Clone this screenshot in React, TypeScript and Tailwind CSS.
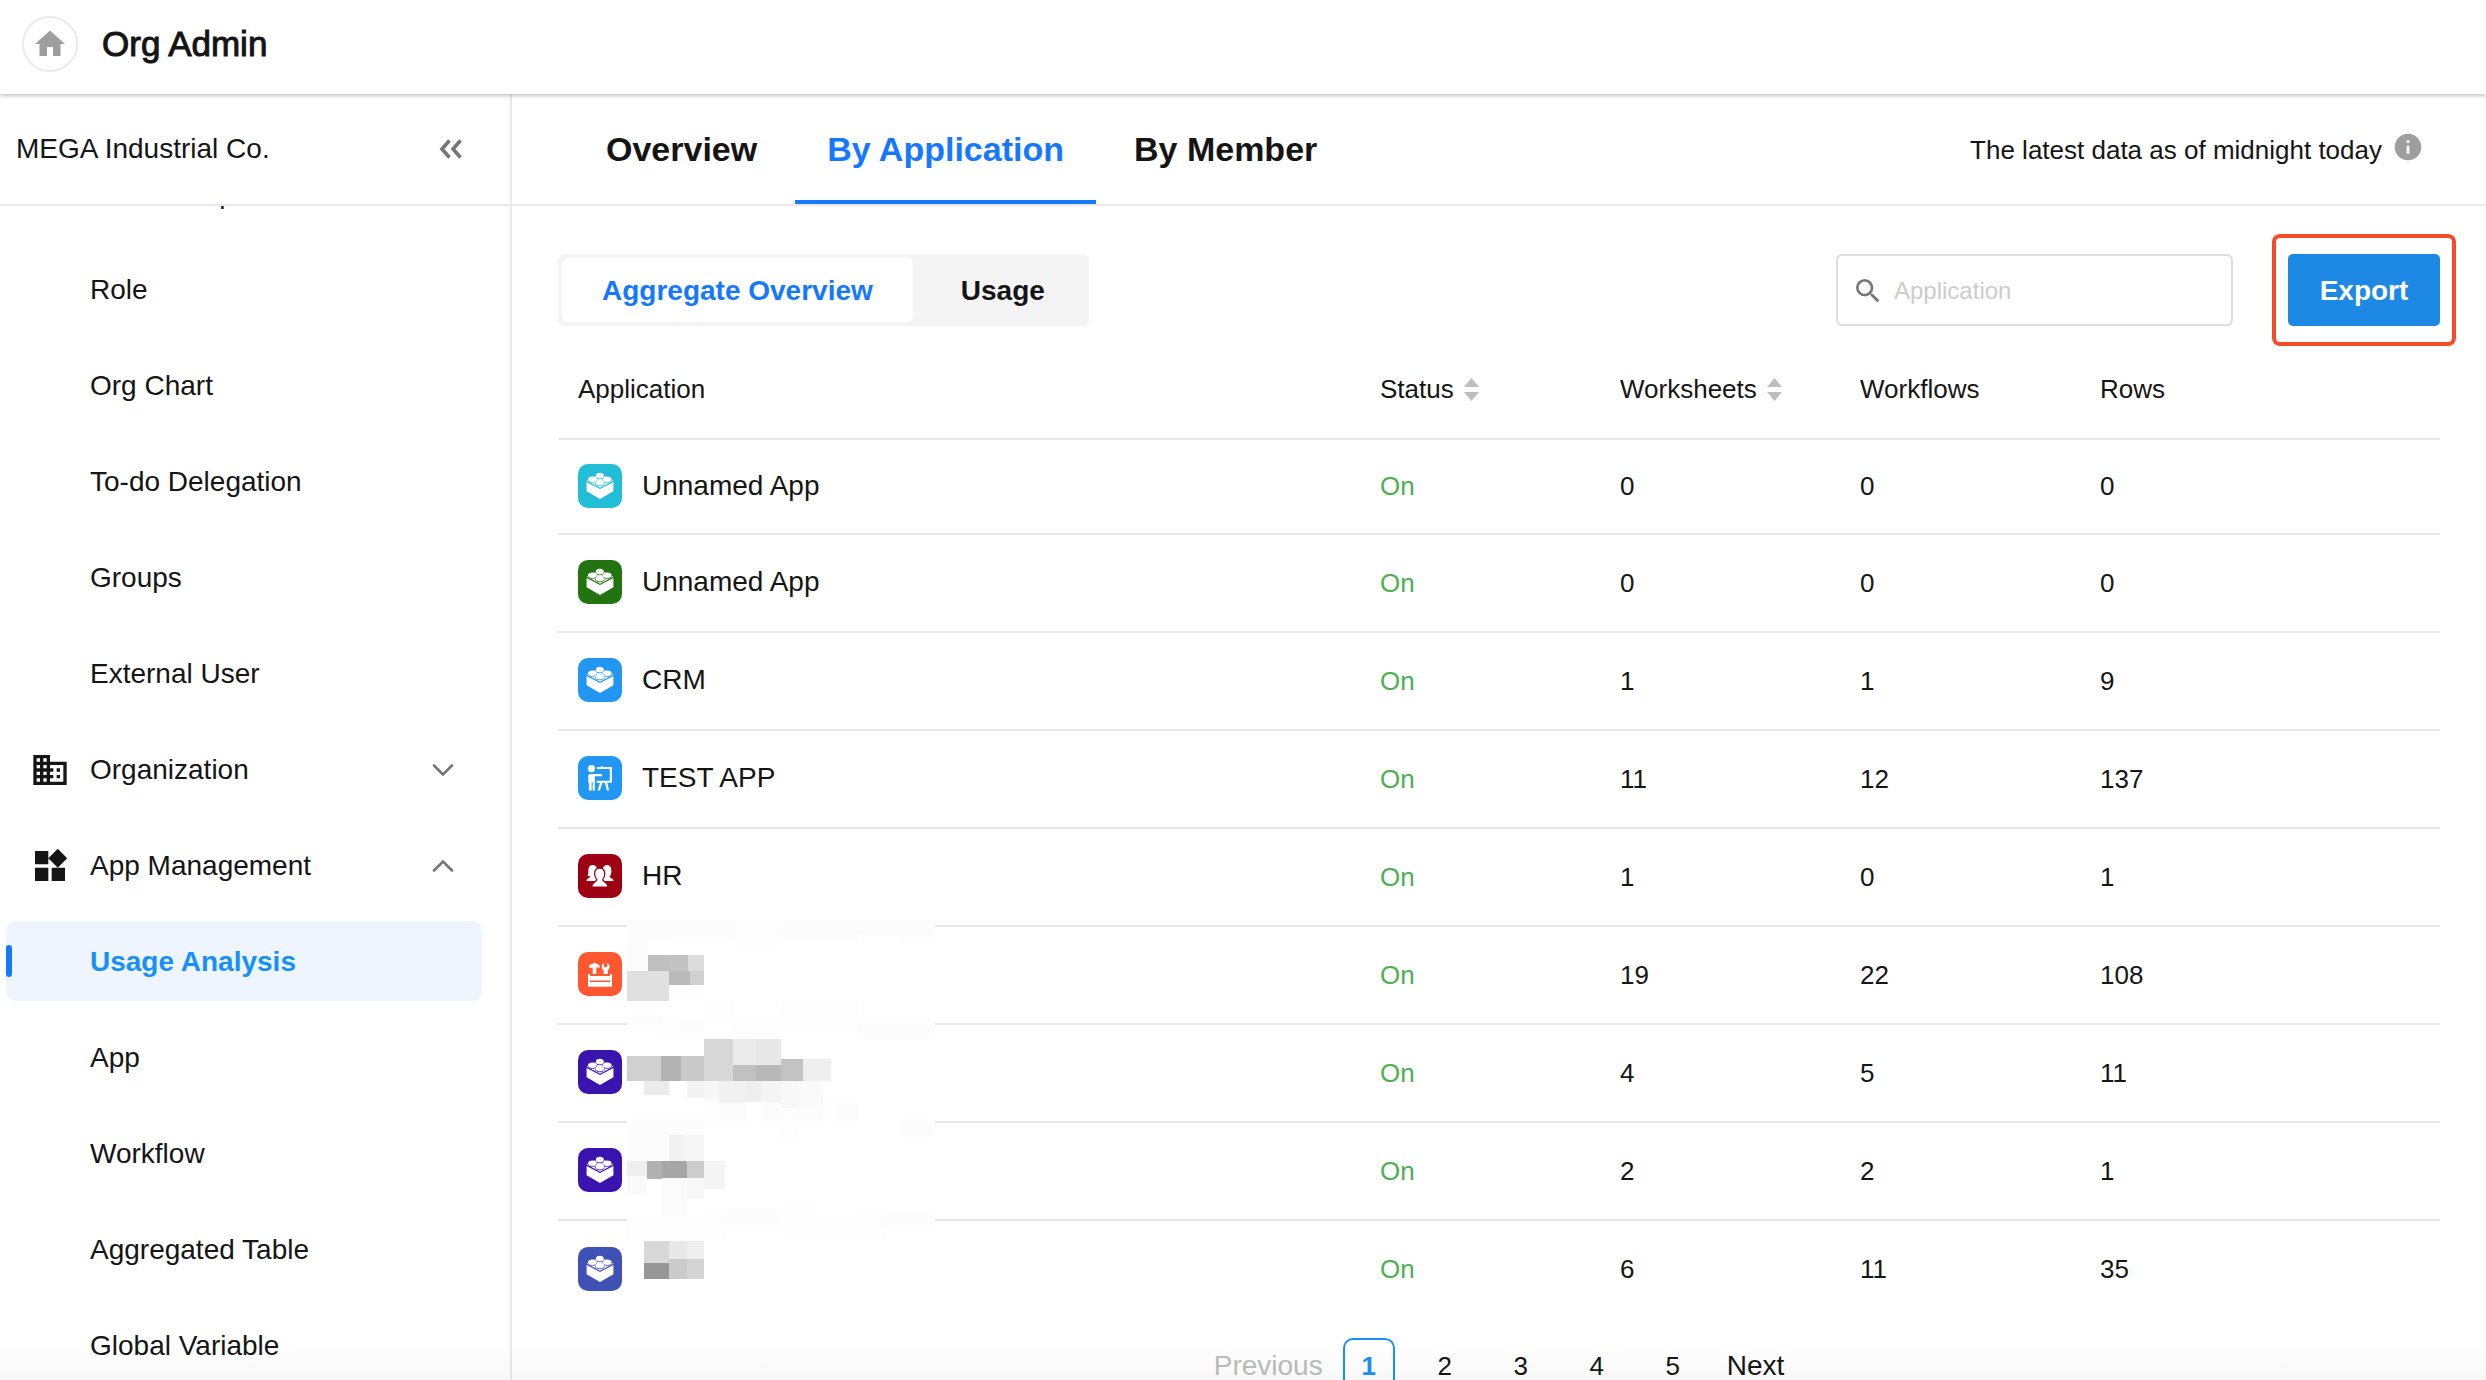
import React, { useState } from "react";
import { MdBusiness, MdHome, MdInfo, MdSearch, MdWidgets } from "react-icons/md";

type AppIconName = "brick" | "teach" | "people" | "toolbox";

interface AppRow {
  name: string;
  icon: AppIconName;
  color: string;
  worksheets: number;
  workflows: number;
  rows: number;
}

const apps: AppRow[] = [
  { name: "Unnamed App", icon: "brick", color: "#22bdd6", worksheets: 0, workflows: 0, rows: 0 },
  { name: "Unnamed App", icon: "brick", color: "#237411", worksheets: 0, workflows: 0, rows: 0 },
  { name: "CRM", icon: "brick", color: "#2196f3", worksheets: 1, workflows: 1, rows: 9 },
  { name: "TEST APP", icon: "teach", color: "#2196f3", worksheets: 11, workflows: 12, rows: 137 },
  { name: "HR", icon: "people", color: "#9c0012", worksheets: 1, workflows: 0, rows: 1 },
  { name: "", icon: "toolbox", color: "#ff572f", worksheets: 19, workflows: 22, rows: 108 },
  { name: "", icon: "brick", color: "#3914af", worksheets: 4, workflows: 5, rows: 11 },
  { name: "", icon: "brick", color: "#3914af", worksheets: 2, workflows: 2, rows: 1 },
  { name: "", icon: "brick", color: "#3f51b5", worksheets: 6, workflows: 11, rows: 35 },
];

const userItems = ["User & Department", "Role", "Org Chart", "To-do Delegation", "Groups", "External User"];
const appItems = ["Usage Analysis", "App", "Workflow", "Aggregated Table", "Global Variable"];

// x, y, width, height, fill
const mosaicBlocks: [number, number, number, number, string][] = [
  [201, 36, 330, 60, "#fcfcfc"],
  [531, 36, 132, 75, "#fdfdfd"],
  [663, 36, 231, 60, "#fcfcfc"],
  [894, 36, 126, 42, "#fcfcfc"],
  [1020, 36, 105, 64, "#fcfcfc"],
  [327, 90, 157, 6, "#ffffff"],
  [201, 96, 63, 90, "#fbfbfb"],
  [264, 138, 63, 48, "#bfbfbf"],
  [327, 138, 57, 48, "#c2c2c2"],
  [384, 138, 48, 48, "#dcdcdc"],
  [201, 186, 126, 90, "#e0e0e0"],
  [327, 186, 63, 42, "#bababa"],
  [390, 186, 42, 42, "#d1d1d1"],
  [327, 228, 105, 48, "#fefefe"],
  [201, 318, 102, 45, "#fcfcfc"],
  [303, 324, 54, 63, "#fdfdfd"],
  [357, 330, 75, 57, "#fcfcfc"],
  [432, 276, 87, 68, "#fdfdfd"],
  [519, 328, 144, 62, "#fdfdfd"],
  [663, 276, 231, 79, "#fdfdfd"],
  [894, 328, 126, 62, "#fcfcfc"],
  [1020, 339, 105, 51, "#fcfcfc"],
  [201, 441, 102, 75, "#d0d0d0"],
  [303, 441, 60, 75, "#b3b3b3"],
  [363, 441, 69, 75, "#cacaca"],
  [432, 390, 87, 126, "#d8d8d8"],
  [519, 390, 69, 78, "#ebebeb"],
  [588, 390, 75, 78, "#e8e8e8"],
  [519, 468, 69, 48, "#c1c1c1"],
  [588, 468, 75, 48, "#b8b8b8"],
  [663, 450, 66, 66, "#c3c3c3"],
  [729, 450, 84, 66, "#eeeeee"],
  [252, 516, 75, 42, "#ebebeb"],
  [381, 516, 51, 51, "#f3f3f3"],
  [432, 516, 45, 57, "#f7f7f7"],
  [477, 516, 81, 66, "#f1f1f1"],
  [558, 516, 45, 63, "#eeeeee"],
  [603, 516, 60, 63, "#f4f4f4"],
  [663, 516, 48, 81, "#f8f8f8"],
  [711, 516, 78, 81, "#fafafa"],
  [432, 573, 45, 68, "#fdfdfd"],
  [477, 582, 81, 59, "#fcfcfc"],
  [603, 579, 60, 60, "#fcfcfc"],
  [663, 597, 48, 102, "#fdfdfd"],
  [711, 597, 78, 54, "#fcfcfc"],
  [789, 560, 42, 79, "#fefefe"],
  [831, 582, 63, 57, "#fcfcfc"],
  [201, 630, 231, 126, "#fcfcfc"],
  [1020, 630, 105, 54, "#fcfcfc"],
  [327, 678, 45, 78, "#f1f1f1"],
  [372, 678, 60, 78, "#f6f6f6"],
  [201, 756, 60, 45, "#efefef"],
  [261, 756, 45, 54, "#b1b1b1"],
  [306, 756, 75, 51, "#a6a6a6"],
  [381, 756, 51, 51, "#cccccc"],
  [432, 756, 63, 84, "#f5f5f5"],
  [201, 801, 60, 54, "#f9f9f9"],
  [306, 807, 75, 113, "#fbfbfb"],
  [381, 807, 51, 63, "#f8f8f8"],
  [201, 920, 231, 76, "#fdfdfd"],
  [432, 900, 63, 96, "#fdfdfd"],
  [495, 900, 168, 50, "#fcfcfc"],
  [663, 873, 96, 123, "#fefefe"],
  [759, 927, 135, 69, "#fdfdfd"],
  [894, 906, 82, 90, "#fdfdfd"],
  [976, 906, 149, 48, "#fcfcfc"],
  [252, 996, 75, 66, "#d8d8d8"],
  [327, 996, 54, 54, "#e8e8e8"],
  [381, 996, 51, 54, "#eeeeee"],
  [252, 1062, 75, 48, "#969696"],
  [327, 1050, 54, 60, "#cbcbcb"],
  [381, 1050, 51, 60, "#d4d4d4"],
];

const Mosaic = () => (
  <svg
    className="absolute left-[69px] top-[562px] pointer-events-none"
    width="308"
    height="388"
    viewBox="201 36 924 1164"
    shapeRendering="crispEdges"
    aria-hidden="true"
  >
    <rect x="201" y="36" width="924" height="1164" fill="#ffffff" />
    {mosaicBlocks.map(([x, y, w, h, fill], i) => (
      <rect key={i} x={x} y={y} width={w} height={h} fill={fill} />
    ))}
  </svg>
);

const AppIcon = ({ icon, color }: { icon: AppIconName; color: string }) => (
  <svg width="44" height="44" viewBox="0 0 44 44" className="shrink-0" aria-hidden="true">
    <rect width="44" height="44" rx="10" fill={color} />
    {icon === "brick" && (
      <g fill="#fff">
        <path d="M8.6 18 22 25l13.400-7v9.200L22 35 8.600 27.200z" />
        <path d="M8.600 16.600 21.800 10l13.600 6.600L22 23.800z" />
        <g stroke={color} strokeWidth="0.9">
          <ellipse cx="14.4" cy="15.800" rx="4.300" ry="2.500" />
          <ellipse cx="29.200" cy="15.800" rx="4.300" ry="2.500" />
          <ellipse cx="21.800" cy="12.200" rx="4.100" ry="2.600" />
          <ellipse cx="21.800" cy="19.200" rx="4.300" ry="2.600" />
        </g>
        <ellipse cx="14.400" cy="15" rx="4.300" ry="2.500" />
        <ellipse cx="29.200" cy="15" rx="4.300" ry="2.500" />
        <ellipse cx="21.800" cy="18.200" rx="4.200" ry="2.500" />
        <ellipse cx="21.800" cy="11.200" rx="3.800" ry="2.500" />
      </g>
    )}
    {icon === "teach" && (
      <g fill="#fff">
        <circle cx="13.4" cy="12.6" r="3.6" />
        <path d="M12.4 18H24v2.300h-7.200v14.300h-2.200V26h-.9v8.600h-2.800v-8.200h-.7v-6.200q0-2.200 2.200-2.200z" />
        <path d="M18.800 11h4.600v-1H25v1h9v15.800h-4.800l2 7.800h-2.300l-2-7.800h-2.500l-2.500 7.800h-2.300l2.400-7.800h-3.400v-2h13.200V13h-13z" />
      </g>
    )}
    {icon === "people" && (
      <g fill="#fff">
        <path d="M14.600 11c2.500 0 3.900 1.300 4.200 3.200v12.800H8.400c.3-2.600 3.400-2.600 4-4.400l-3-.8c1.600-1.700.6-3.800 1-6.400.3-2.800 1.600-4.400 4.200-4.400z" />
        <path d="M29.200 11c-2.500 0-3.900 1.300-4.200 3.200v12.800h10.600c-.3-2.600-3.600-2.600-4-4.400 1.300-1.300 1.800-3 1.800-5.600 0-3.600-1.200-6-4.200-6z" />
        <path
          stroke={color}
          strokeWidth="2.6"
          paintOrder="stroke"
          d="M21.700 14.800c3.100 0 4.500 2 4.400 5-.1 2.600-1 4.300-2 5.400-.2 3.400 4.600 2.800 5.200 7.400H14.400c.6-4.600 5.200-4 5-7.400-1.100-1.100-2-2.800-2.100-5.400-.1-3 1.400-5 4.400-5z"
        />
      </g>
    )}
    {icon === "toolbox" && (
      <g fill="#fff">
        <path d="M11 14.800c.5-2.200 2-3 4.200-3l1.400-1.600 1.600 1.600c1.500 0 2.500.8 3.600 2.400v1.200h-3.500V22h-3.600v-6.200H11z" />
        <path d="M25.800 11v3.400l1.600 1.200 1.800-1.200V11c1.600.8 2.600 2.200 2.400 4-.1 1.400-.8 2.400-1.800 3.200V22h-4.200v-3.800c-1.100-.8-1.700-1.800-1.800-3.200-.1-1.800.6-3.200 2-4z" />
        <path fillRule="evenodd" d="M10 22h2v2h20v-2h2v12.800H10zM12 28.400v1.600h20v-1.600z" />
      </g>
    )}
  </svg>
);

const Chevron = ({ up }: { up?: boolean }) => (
  <svg
    className="ml-auto mr-7"
    width="22"
    height="14"
    viewBox="0 0 22 14"
    fill="none"
    stroke="#757575"
    strokeWidth="2.6"
    strokeLinecap="round"
    aria-hidden="true"
  >
    <path d={up ? "M2 11.5l9-9 9 9" : "M2 2.500l9 9 9-9"} />
  </svg>
);

const SortArrows = () => (
  <svg width="15" height="23" viewBox="0 0 15 23" fill="#bdbdbd" aria-hidden="true">
    <path d="M7.5 0 15 9H0z" />
    <path d="M0 14h15l-7.500 9z" />
  </svg>
);

const NavItem = ({ label, active }: { label: string; active?: boolean }) => (
  <li>
    <a
      href="#"
      className={
        active
          ? "relative flex h-20 items-center rounded-[10px] bg-[#eff5ff] pl-[84px] pt-0.5 font-bold text-[#1890f9]"
          : "flex h-20 items-center pl-[84px] pt-0.5"
      }
    >
      {active && <span className="absolute left-0 top-6 h-8 w-[6px] rounded-[3px] bg-[#1677ff]" />}
      {label}
    </a>
  </li>
);

const Sidebar = () => (
  <aside className="flex w-[512px] shrink-0 flex-col border-r-2 border-[#eaeaea] text-[28px] leading-8">
    <div className="flex h-[112px] shrink-0 items-center justify-between border-b-2 border-[#eaeaea] pl-4 pr-12">
      <span>MEGA Industrial Co.</span>
      <button type="button" aria-label="Collapse menu">
        <svg width="24" height="20" viewBox="0 0 24 20" fill="none" stroke="#757575" strokeWidth="3.6">
          <path d="M11.500 1.500 4 10l7.500 8.500M22.500 1.500 15 10l7.500 8.500" />
        </svg>
      </button>
    </div>
    <nav className="min-h-0 flex-1 overflow-hidden pl-[6px] pr-7">
      <ul className="-mt-[53px] flex flex-col gap-4">
        {userItems.map((item) => (
          <NavItem key={item} label={item} />
        ))}
        <li>
          <button type="button" className="flex h-20 w-full items-center pl-6 pt-0.5">
            <MdBusiness size={40} className="mr-5" />
            Organization
            <Chevron />
          </button>
        </li>
        <li>
          <button type="button" className="flex h-20 w-full items-center pl-6 pt-0.5">
            <MdWidgets size={40} className="mr-5" />
            App Management
            <Chevron up />
          </button>
        </li>
        {appItems.map((item) => (
          <NavItem key={item} label={item} active={item === "Usage Analysis"} />
        ))}
      </ul>
    </nav>
  </aside>
);

const tabs = ["Overview", "By Application", "By Member"];

const Tabs = () => {
  const [tab, setTab] = useState("By Application");

  return (
    <div className="flex h-[112px] shrink-0 items-center border-b-2 border-[#eaeaea] px-[62px]">
      <div className="flex h-full gap-[6px]">
        {tabs.map((item) => (
          <button
            key={item}
            type="button"
            onClick={() => setTab(item)}
            className={
              item === tab
                ? "h-full border-b-4 border-[#1677ff] px-8 pt-1 text-[34px] font-bold text-[#1677ff]"
                : "h-full border-b-4 border-transparent px-8 pt-1 text-[34px] font-bold"
            }
          >
            {item}
          </button>
        ))}
      </div>
      <span className="ml-auto pt-0.5 text-[26px]">The latest data as of midnight today</span>
      <MdInfo size={32} className="mb-1 ml-[10px] text-[#9e9e9e]" />
    </div>
  );
};

const Toolbar = () => {
  const [view, setView] = useState("Aggregate Overview");
  const [keyword, setKeyword] = useState("");

  return (
    <div className="flex items-center">
      <div className="flex h-[72px] gap-2 rounded-md bg-[#f4f4f4] p-1">
        {["Aggregate Overview", "Usage"].map((item) => (
          <button
            key={item}
            type="button"
            onClick={() => setView(item)}
            className={
              item === view
                ? "rounded-md bg-white px-10 pt-0.5 text-[28px] font-bold text-[#1677ff]"
                : "rounded-md px-10 pt-0.5 text-[28px] font-bold"
            }
          >
            {item}
          </button>
        ))}
      </div>

      {/* Search */}
      <label className="ml-auto flex h-[72px] w-[397px] items-center rounded-md border-2 border-[#dddddd] pl-[14px] pt-0.5">
        <MdSearch size={32} className="shrink-0 text-[#757575]" />
        <input
          type="text"
          aria-label="Search application"
          placeholder="Application"
          value={keyword}
          onChange={(e) => setKeyword(e.target.value)}
          className="ml-[10px] min-w-0 flex-1 text-[24px] outline-none placeholder:text-[#cccccc]"
        />
      </label>

      <div className="relative ml-[55px]">
        <button
          type="button"
          className="h-[72px] w-[152px] rounded-[5px] bg-[#1e88e5] pt-0.5 text-[28px] font-bold text-white"
        >
          Export
        </button>
        <span className="pointer-events-none absolute -inset-x-4 -inset-y-5 rounded-lg border-4 border-[#f74a27]" />
      </div>
    </div>
  );
};

const AppTable = () => (
  <div className="relative mt-[33px]">
    <table className="w-full table-fixed border-collapse text-left text-[26px]">
      <colgroup>
        <col />
        <col className="w-[240px]" />
        <col className="w-[240px]" />
        <col className="w-[240px]" />
        <col className="w-[340px]" />
      </colgroup>
      <thead>
        <tr className="h-[80px] align-top">
          <th className="pl-5 pt-[11px] font-normal">Application</th>
          <th className="pt-[11px] font-normal">
            <button type="button" className="flex items-center gap-[10px]">
              Status <SortArrows />
            </button>
          </th>
          <th className="pt-[11px] font-normal">
            <button type="button" className="flex items-center gap-[10px]">
              Worksheets <SortArrows />
            </button>
          </th>
          <th className="pt-[11px] font-normal">Workflows</th>
          <th className="pt-[11px] font-normal">Rows</th>
        </tr>
      </thead>
      <tbody>
        {apps.map((app, i) => (
          <tr key={i} className="h-[98px] border-t-2 border-[#e8e8e8] first:h-[95px]">
            <td className="pb-0.5 pl-5">
              <div className="flex items-center gap-5 text-[28px] leading-8">
                <AppIcon icon={app.icon} color={app.color} />
                {app.name}
              </div>
            </td>
            <td className="text-[#4caf50]">On</td>
            <td>{app.worksheets}</td>
            <td>{app.workflows}</td>
            <td>{app.rows}</td>
          </tr>
        ))}
      </tbody>
    </table>
    <Mosaic />
  </div>
);

const Pagination = () => {
  const [page, setPage] = useState(1);

  return (
    <nav className="mt-5 flex items-center justify-center text-[26px] leading-6">
      <button type="button" disabled className="mr-5 text-[28px] leading-6 text-[#bdbdbd]">
        Previous
      </button>
      <div className="flex gap-6">
        {[1, 2, 3, 4, 5].map((n) => (
          <button
            key={n}
            type="button"
            onClick={() => setPage(n)}
            className={
              n === page
                ? "h-14 w-[52px] rounded-[10px] border-2 border-[#1890f9] font-bold text-[#1890f9]"
                : "h-14 w-[52px]"
            }
          >
            {n}
          </button>
        ))}
      </div>
      <button type="button" className="ml-7 text-[28px] leading-6">
        Next
      </button>
    </nav>
  );
};

const App = () => {
  return (
    <div className="relative flex h-screen flex-col overflow-hidden bg-white font-['Liberation_Sans',Arial,sans-serif] text-[#151515]">
      <header className="z-10 flex h-[94px] shrink-0 items-center bg-white pb-[6px] pl-[22px] shadow-[0_2px_4px_rgba(0,0,0,0.24)]">
        <a
          href="#"
          aria-label="Home"
          className="flex h-14 w-14 items-center justify-center rounded-full border-2 border-[#eaeaea] text-[#9e9e9e]"
        >
          <MdHome size={36} />
        </a>
        <h1 className="ml-6 text-[35px] [-webkit-text-stroke:1px_#151515]">Org Admin</h1>
      </header>

      <div className="flex min-h-0 flex-1">
        <Sidebar />
        <main className="flex min-w-0 flex-1 flex-col overflow-hidden">
          <Tabs />
          <div className="px-[46px] pt-12">
            <Toolbar />
            <AppTable />
          </div>
          <Pagination />
        </main>
      </div>
      <div className="pointer-events-none absolute inset-x-0 bottom-0 h-9 bg-linear-to-b from-transparent to-black/3" />
    </div>
  );
};

export default App;
